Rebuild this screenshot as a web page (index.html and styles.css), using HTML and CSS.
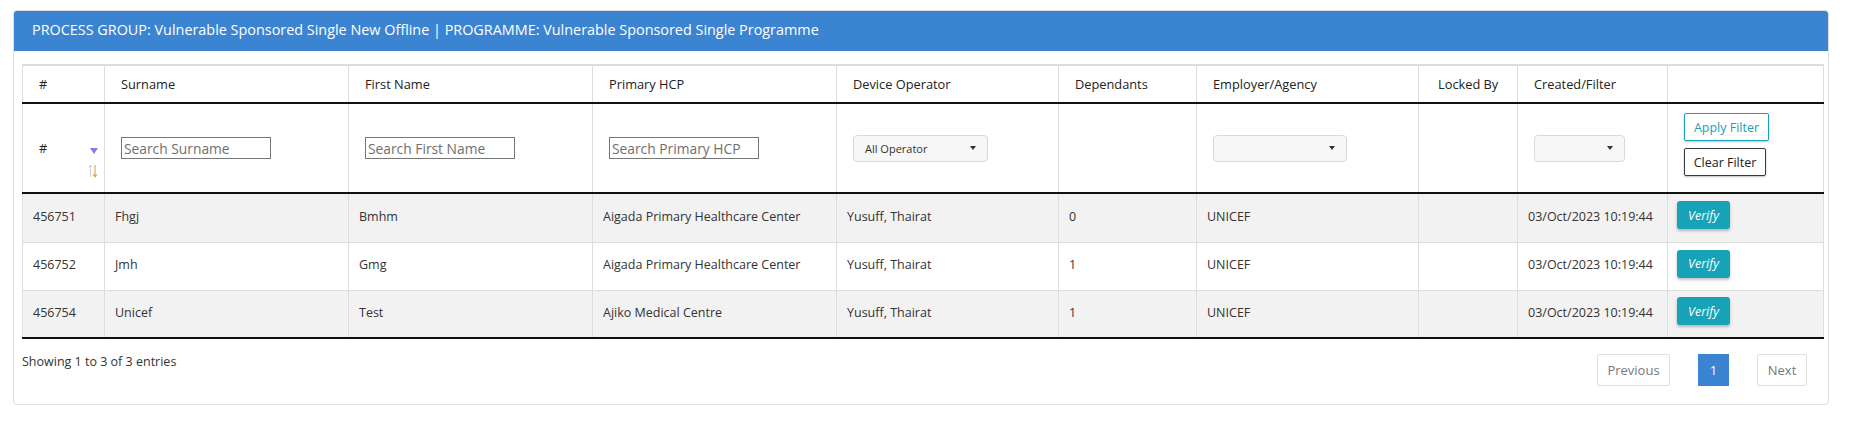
FILE: index.html
```html
<!DOCTYPE html>
<html>
<head>
<meta charset="utf-8">
<link rel="stylesheet" href="styles.css">
</head>
<body>
<div class="panel">
  <div class="panel-heading">PROCESS GROUP: Vulnerable Sponsored Single New Offline | PROGRAMME: Vulnerable Sponsored Single Programme</div>
  <div class="panel-body">
    <table class="grid">
      <colgroup>
        <col class="c1"><col class="c2"><col class="c3"><col class="c4"><col class="c5"><col class="c6"><col class="c7"><col class="c8"><col class="c9"><col class="c10">
      </colgroup>
      <thead>
        <tr class="head">
          <th>#</th><th>Surname</th><th>First Name</th><th>Primary HCP</th><th>Device Operator</th><th>Dependants</th><th>Employer/Agency</th><th class="locked">Locked By</th><th>Created/Filter</th><th></th>
        </tr>
        <tr class="filters">
          <th class="hash-th">
            <div class="hash-cell">
              <span class="hash">#</span>
              <span class="sorter">
                <svg width="8" height="6" viewBox="0 0 8 6"><path d="M0 0 H8 L4 6 Z" fill="#7f7fe0"/></svg>
                <svg width="10" height="14" viewBox="0 0 10 14"><path d="M2.5 13 V1.5 M0.7 3.6 L2.5 1.2 L4.3 3.6" stroke="#cfcfcf" stroke-width="1" fill="none"/><path d="M7 1 V12.5 M5.2 10.4 L7 12.8 L8.8 10.4" stroke="#e2a048" stroke-width="1.1" fill="none"/></svg>
              </span>
            </div>
          </th>
          <th><input class="search" type="text" placeholder="Search Surname"></th>
          <th><input class="search" type="text" placeholder="Search First Name"></th>
          <th><input class="search" type="text" placeholder="Search Primary HCP"></th>
          <th><div class="dd dd-op"><span>All Operator</span><i class="caret"></i></div></th>
          <th></th>
          <th><div class="dd dd-emp"><span></span><i class="caret"></i></div></th>
          <th></th>
          <th><div class="dd dd-created"><span></span><i class="caret"></i></div></th>
          <th>
            <div class="filter-btns">
              <button class="btn-apply">Apply Filter</button>
              <button class="btn-clear">Clear Filter</button>
            </div>
          </th>
        </tr>
      </thead>
      <tbody>
        <tr class="odd">
          <td>456751</td><td>Fhgj</td><td>Bmhm</td><td>Aigada Primary Healthcare Center</td><td>Yusuff, Thairat</td><td>0</td><td>UNICEF</td><td></td><td>03/Oct/2023 10:19:44</td><td><button class="btn-verify">Verify</button></td>
        </tr>
        <tr class="even">
          <td>456752</td><td>Jmh</td><td>Gmg</td><td>Aigada Primary Healthcare Center</td><td>Yusuff, Thairat</td><td>1</td><td>UNICEF</td><td></td><td>03/Oct/2023 10:19:44</td><td><button class="btn-verify">Verify</button></td>
        </tr>
        <tr class="odd">
          <td>456754</td><td>Unicef</td><td>Test</td><td>Ajiko Medical Centre</td><td>Yusuff, Thairat</td><td>1</td><td>UNICEF</td><td></td><td>03/Oct/2023 10:19:44</td><td><button class="btn-verify">Verify</button></td>
        </tr>
      </tbody>
    </table>
    <div class="footer">
      <div class="info">Showing 1 to 3 of 3 entries</div>
      <div class="pager">
        <span class="pg pg-prev">Previous</span>
        <span class="pg pg-cur">1</span>
        <span class="pg pg-next">Next</span>
      </div>
    </div>
  </div>
</div>
</body>
</html>
```
FILE: styles.css
```css
* { box-sizing: border-box; }
body {
  margin: 0;
  background: #ffffff;
  font-family: "Open Sans", "DejaVu Sans", sans-serif;
  color: #333333;
}
.panel {
  margin: 10px 0 0 13px;
  width: 1816px;
  height: 395px;
  border: 1px solid #dddddd;
  border-radius: 4px;
  overflow: hidden;
}
.panel-heading {
  height: 40px;
  background: #3b84d2;
  color: #ffffff;
  font-size: 14.4px;
  line-height: 37px;
  padding-left: 18px;
  white-space: nowrap;
}
.panel-body {
  padding: 13px 5px 0 8px;
}
.grid {
  width: 1801px;
  table-layout: fixed;
  border-collapse: collapse;
  border: 1px solid #dddddd;
  border-top: 2px solid #dddddd;
  font-size: 13px;
}
.c1 { width: 82px; }
.c2, .c3, .c4 { width: 244px; }
.c5 { width: 222px; }
.c6 { width: 138px; }
.c7 { width: 222px; }
.c8 { width: 99px; }
.c9 { width: 150px; }
.c10 { width: 156px; }

.grid th {
  text-align: left;
  font-weight: 400;
  font-size: 12.8px;
  color: #222222;
  padding: 0 10px 0 16px;
  border-left: 1px solid #dddddd;
  border-bottom: 2px solid #111111;
  vertical-align: middle;
}
.grid th.locked { padding-left: 19px; }
.head th { height: 38px; }
.filters th { height: 90px; }

.grid th.hash-th {
  vertical-align: top;
  padding: 0 6px 0 16px;
}
.hash-cell {
  display: flex;
  justify-content: space-between;
  align-items: flex-start;
}
.hash {
  margin-top: 35px;
  line-height: 18px;
}
.sorter {
  display: flex;
  flex-direction: column;
  align-items: flex-end;
  gap: 10px;
  margin-top: 44px;
}

.search {
  width: 150px;
  height: 22px;
  border: 1px solid #767676;
  padding: 1px 2px;
  font-family: "Open Sans", sans-serif;
  font-size: 13.8px;
  color: #333;
  background: #fff;
  border-radius: 0;
  outline: none;
}
.search::placeholder { color: #6f6f6f; }

.dd {
  display: flex;
  align-items: center;
  justify-content: space-between;
  height: 27px;
  background: #f7f7f7;
  border: 1px solid #d9d9d9;
  border-radius: 4px;
  padding: 0 11px 0 11px;
  font-size: 11px;
  color: #333;
}
.dd-op { width: 135px; }
.dd-emp { width: 134px; }
.dd-created { width: 91px; }
.caret {
  width: 0;
  height: 0;
  border-left: 3px solid transparent;
  border-right: 3px solid transparent;
  border-top: 4px solid #333;
}

.filter-btns {
  display: flex;
  flex-direction: column;
  align-items: flex-start;
  gap: 7px;
  padding-bottom: 7px;
}
.filter-btns button {
  height: 28px;
  background: #fff;
  border-radius: 2px;
  font-family: "Open Sans", sans-serif;
  font-size: 12.5px;
  padding: 0 6px;
  box-shadow: 0 1px 2px rgba(0,0,0,0.25);
}
.btn-apply { width: 85px; border: 1px solid #17a2b8; color: #17a2b8; }
.btn-clear { width: 82px; border: 1px solid #343a40; color: #222; }

.grid td {
  padding: 0 10px 3px 10px;
  height: 48px;
  font-size: 12.5px;
  border-left: 1px solid #dddddd;
  border-top: 1px solid #dddddd;
  vertical-align: middle;
  white-space: nowrap;
  color: #333;
}
.grid tbody tr.odd td { background: #f2f2f2; }
.grid tbody tr.even td { background: #ffffff; }
.grid tbody tr:first-child td { border-top: none; height: 49px; }
.grid tbody tr:last-child td { border-bottom: 2px solid #111111; }
.grid td:last-child { padding-left: 9px; }

.btn-verify {
  width: 53px;
  height: 28px;
  background: #17a2b8;
  color: #fff;
  font-style: italic;
  font-family: "Open Sans", sans-serif;
  font-size: 12.5px;
  border: none;
  border-radius: 3px;
  box-shadow: 0 2px 3px rgba(0,0,0,0.25);
  padding: 0;
  margin-top: -2px;
}

.footer {
  display: flex;
  justify-content: space-between;
  align-items: flex-start;
  width: 1801px;
}
.info {
  font-size: 12.5px;
  color: #333;
  padding-top: 14px;
}
.pager {
  display: flex;
  gap: 28px;
  padding-top: 15px;
  padding-right: 16px;
}
.pg {
  display: flex;
  align-items: center;
  justify-content: center;
  height: 32px;
  font-size: 13px;
  border-radius: 2px;
}
.pg-prev, .pg-next {
  border: 1px solid #dfdfdf;
  color: #777;
}
.pg-prev { width: 73px; }
.pg-next { width: 50px; }
.pg-cur {
  width: 31px;
  background: #3b84d2;
  color: #fff;
  border-radius: 0;
}
```
